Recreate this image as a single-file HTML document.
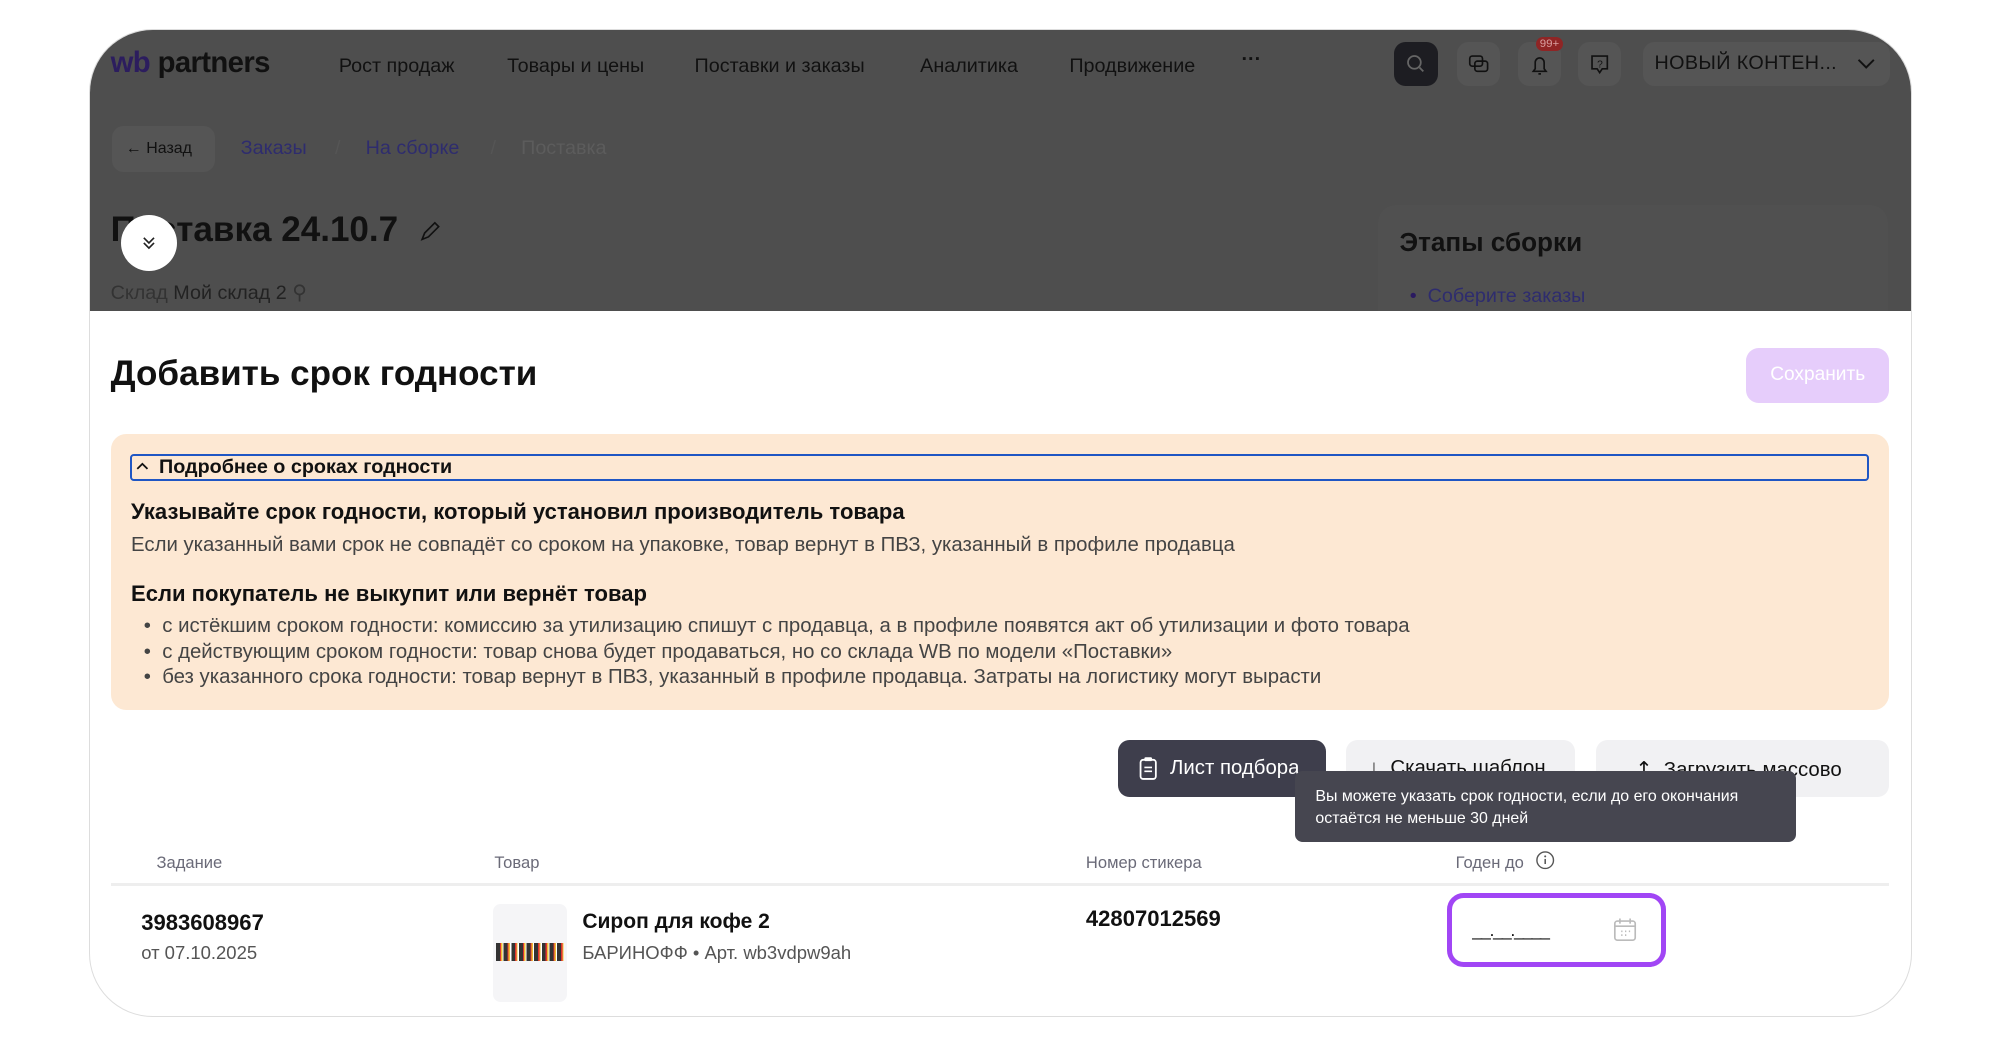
<!DOCTYPE html>
<html><head><meta charset="utf-8"><style>
html,body{margin:0;padding:0;background:#fff;width:1999px;height:1051px;overflow:hidden}
#w{zoom:1.27487;width:1568px;height:824px;position:relative;font-family:"Liberation Sans","Noto Sans CJK SC",sans-serif;color:#111}
.a{position:absolute;white-space:nowrap}
#frame{position:absolute;left:70px;top:23px;width:1428px;height:773px;border:1px solid #ddd;border-radius:50px;overflow:hidden;background:#fff}
#dark{position:absolute;left:0;top:0;width:100%;height:220px;background:#4e4e4e;overflow:hidden}
.nav{font-size:15.5px;color:#111;top:42px}
.ib{position:absolute;top:9px;width:34px;height:35px;border-radius:9px;background:#555}
.g{color:#444}
</style></head><body><div id="w">
<div id="frame">
 <div id="dark">
  <div class="a" style="left:16px;top:12px;font-size:23px;letter-spacing:-0.5px;font-weight:bold"><span style="color:#2c1d5e">wb</span> <span style="color:#111">partners</span></div>
  <div class="a nav" style="left:195px;top:19px">Рост продаж</div>
  <div class="a nav" style="left:327px;top:19px">Товары и цены</div>
  <div class="a nav" style="left:474px;top:19px">Поставки и заказы</div>
  <div class="a nav" style="left:651px;top:19px">Аналитика</div>
  <div class="a nav" style="left:768px;top:19px">Продвижение</div>
  <div class="a nav" style="left:903px;top:14px;font-weight:bold">···</div>
  <div class="ib" style="left:1023px;background:#1d1d22"><svg width="34" height="35"><circle cx="16" cy="16" r="5" fill="none" stroke="#666" stroke-width="1.4"/><path d="M20 20l3 3" stroke="#666" stroke-width="1.4"/></svg></div>
  <div class="ib" style="left:1072px"><svg width="34" height="35"><rect x="10" y="11" width="10" height="8" rx="2" fill="none" stroke="#111" stroke-width="1.3"/><rect x="14" y="15" width="10" height="8" rx="2" fill="none" stroke="#111" stroke-width="1.3"/></svg></div>
  <div class="ib" style="left:1120px"><svg width="34" height="35"><path d="M12 23h10l-1.5-2v-5a3.5 3.5 0 0 0-7 0v5z M16 25h2" fill="none" stroke="#111" stroke-width="1.3"/></svg></div>
  <div class="a" style="left:1134px;top:5px;background:#8f2525;color:#d9a0a0;font-size:9px;border-radius:8px;padding:1px 3px">99+</div>
  <div class="ib" style="left:1167px"><svg width="34" height="35"><path d="M11 11h12v10h-4l-2 3-2-3h-4z" fill="none" stroke="#111" stroke-width="1.3"/><text x="15" y="20" font-size="8" fill="#111" font-family="Liberation Sans">?</text></svg></div>
  <div class="a" style="left:1218px;top:9px;width:194px;height:35px;border-radius:9px;background:#555"></div>
  <div class="a" style="left:1227px;top:17px;font-size:15.5px;color:#111;letter-spacing:0.3px">НОВЫЙ КОНТЕН...</div>
  <svg class="a" style="left:1385px;top:20px" width="16" height="12"><path d="M2 3l6 6 6-6" fill="none" stroke="#111" stroke-width="1.5"/></svg>
  <div class="a" style="left:17px;top:75px;width:81px;height:36px;border-radius:9px;background:#555"></div>
  <div class="a" style="left:28px;top:86px;font-size:12.5px;color:#111">← Назад</div>
  <div class="a" style="left:118px;top:84px;font-size:15.5px;color:#2e2c6e">Заказы</div>
  <div class="a" style="left:192px;top:84px;font-size:15.5px;color:#555">/</div>
  <div class="a" style="left:216px;top:84px;font-size:15.5px;color:#2e2c6e">На сборке</div>
  <div class="a" style="left:314px;top:84px;font-size:15.5px;color:#555">/</div>
  <div class="a" style="left:338px;top:84px;font-size:15.5px;color:#5c5c5c">Поставка</div>
  <div class="a" style="left:16px;top:141px;font-size:27.5px;font-weight:bold;color:#111">Поставка 24.10.7</div>
  <svg class="a" style="left:256px;top:148px" width="20" height="20"><path d="M4 16l2-5 8-8 3 3-8 8z" fill="none" stroke="#111" stroke-width="1.3"/></svg>
  <div class="a" style="left:24px;top:145px;width:44px;height:44px;border-radius:50%;background:#fff"></div>
  <svg class="a" style="left:39px;top:160px" width="14" height="14"><path d="M3 3l4 4 4-4M3 7l4 4 4-4" fill="none" stroke="#222" stroke-width="1.3"/></svg>
  <div class="a" style="left:16px;top:197px;font-size:15.5px;color:#222"><span style="color:#333">Склад</span> Мой склад 2 <span style="color:#333">⚲</span></div>
  <div class="a" style="left:1010px;top:137px;width:400px;height:120px;background:#505050;border-radius:14px"></div>
  <div class="a" style="left:1027px;top:154px;font-size:20.5px;font-weight:bold;color:#111">Этапы сборки</div>
  <div class="a" style="left:1035px;top:200px;font-size:15.5px;color:#2e2c6e"><span style="color:#2a1a60">•</span>&nbsp; Соберите заказы</div>
 </div>
 <div class="a" style="left:16px;top:254px;font-size:27.5px;font-weight:bold">Добавить срок годности</div>
 <div class="a" style="left:1299px;top:249px;width:112px;height:43px;border-radius:10px;background:#e6cdfb;color:#fff;font-size:15px;line-height:43px;text-align:center">Сохранить</div>
 <div class="a" style="left:16px;top:317px;width:1395px;height:216px;border-radius:12px;background:#fde8d3"></div>
 <div class="a" style="left:31px;top:332px;width:1361px;height:18px;border:2px solid #1f56c4;border-radius:3px"></div>
 <div class="a" style="left:36px;top:334px;font-size:15.5px;font-weight:bold;color:#111"><svg width="10" height="10" style="margin-right:8px"><path d="M1 7l4-4 4 4" fill="none" stroke="#111" stroke-width="1.4"/></svg>Подробнее о сроках годности</div>
 <div class="a" style="left:32px;top:368px;font-size:17.3px;font-weight:bold">Указывайте срок годности, который установил производитель товара</div>
 <div class="a g" style="left:32px;top:395px;font-size:16px">Если указанный вами срок не совпадёт со сроком на упаковке, товар вернут в ПВЗ, указанный в профиле продавца</div>
 <div class="a" style="left:32px;top:432px;font-size:17.3px;font-weight:bold">Если покупатель не выкупит или вернёт товар</div>
 <div class="a g" style="left:42px;top:459px;font-size:16px">•&nbsp; с истёкшим сроком годности: комиссию за утилизацию спишут с продавца, а в профиле появятся акт об утилизации и фото товара</div>
 <div class="a g" style="left:42px;top:479px;font-size:16px">•&nbsp; с действующим сроком годности: товар снова будет продаваться, но со склада WB по модели «Поставки»</div>
 <div class="a g" style="left:42px;top:499px;font-size:16px">•&nbsp; без указанного срока годности: товар вернут в ПВЗ, указанный в профиле продавца. Затраты на логистику могут вырасти</div>
 <div class="a" style="left:806px;top:557px;width:163px;height:44px;border-radius:9px;background:#3e3e4c"></div>
 <svg class="a" style="left:822px;top:569px" width="16" height="20"><rect x="2" y="3" width="12" height="15" rx="2" fill="none" stroke="#fff" stroke-width="1.4"/><rect x="5" y="1" width="6" height="3" rx="1" fill="#fff"/><path d="M5 9h6M5 12h6" stroke="#fff" stroke-width="1.3"/></svg>
 <div class="a" style="left:847px;top:570px;font-size:16px;color:#fff">Лист подбора</div>
 <div class="a" style="left:985px;top:557px;width:180px;height:44px;border-radius:9px;background:#f1f1f3"></div>
 <div class="a" style="left:1003px;top:570px;font-size:16px;color:#111">↓&nbsp; Скачать шаблон</div>
 <div class="a" style="left:1181px;top:557px;width:230px;height:44px;border-radius:9px;background:#f1f1f3"></div>
 <div class="a" style="left:1212px;top:570px;font-size:16px;color:#111">↥&nbsp; Загрузить массово</div>
 <div class="a" style="left:945px;top:581px;width:393px;height:56px;border-radius:6px;background:#464650"></div>
 <div class="a" style="left:961px;top:593px;font-size:12.5px;color:#fff;line-height:17px">Вы можете указать срок годности, если до его окончания<br>остаётся не меньше 30 дней</div>
 <div class="a" style="left:52px;top:645px;font-size:13px;color:#6a6a78">Задание</div>
 <div class="a" style="left:317px;top:645px;font-size:13px;color:#6a6a78">Товар</div>
 <div class="a" style="left:781px;top:645px;font-size:13px;color:#6a6a78">Номер стикера</div>
 <div class="a" style="left:1071px;top:645px;font-size:13px;color:#6a6a78">Годен до</div>
 <svg class="a" style="left:1133px;top:643px" width="16" height="16"><circle cx="8" cy="8" r="6.5" fill="none" stroke="#555" stroke-width="1.1"/><path d="M8 7v4" stroke="#555" stroke-width="1.2"/><circle cx="8" cy="5" r="0.8" fill="#555"/></svg>
 <div class="a" style="left:16px;top:669px;width:1395px;height:2px;background:#eee"></div>
 <div class="a" style="left:40px;top:690px;font-size:17.3px;font-weight:bold">3983608967</div>
 <div class="a" style="left:40px;top:715px;font-size:14.5px;color:#555">от 07.10.2025</div>
 <div class="a" style="left:316px;top:685px;width:58px;height:77px;border-radius:6px;background:#f5f5f7"></div>
 <div class="a" style="left:318px;top:716px;width:54px;height:14px;background:repeating-linear-gradient(90deg,#333 0 3px,#d33 3px 4px,#eb3 4px 5px,#fff 5px 6px)"></div>
 <div class="a" style="left:386px;top:690px;font-size:16.5px;font-weight:bold">Сироп для кофе 2</div>
 <div class="a" style="left:386px;top:715px;font-size:14.5px;color:#555">БАРИНОФФ • Арт. wb3vdpw9ah</div>
 <div class="a" style="left:781px;top:687px;font-size:17.3px;font-weight:bold">42807012569</div>
 <div class="a" style="left:1064px;top:677px;width:164px;height:50px;border:4px solid #a146f5;border-radius:13px;background:#fff"></div>
 <div class="a" style="left:1084px;top:698px;font-size:14px;color:#111;letter-spacing:-1px">__.__.____</div>
 <svg class="a" style="left:1193px;top:695px" width="22" height="22"><rect x="3" y="4" width="16" height="15" rx="2" fill="none" stroke="#bbb" stroke-width="1.3"/><path d="M3 8h16M7 2v4M15 2v4" stroke="#bbb" stroke-width="1.3"/><path d="M8 12h1M11 12h1M14 12h1M8 15h1M11 15h1" stroke="#bbb" stroke-width="1.3"/></svg>
</div>
</div></body></html>
